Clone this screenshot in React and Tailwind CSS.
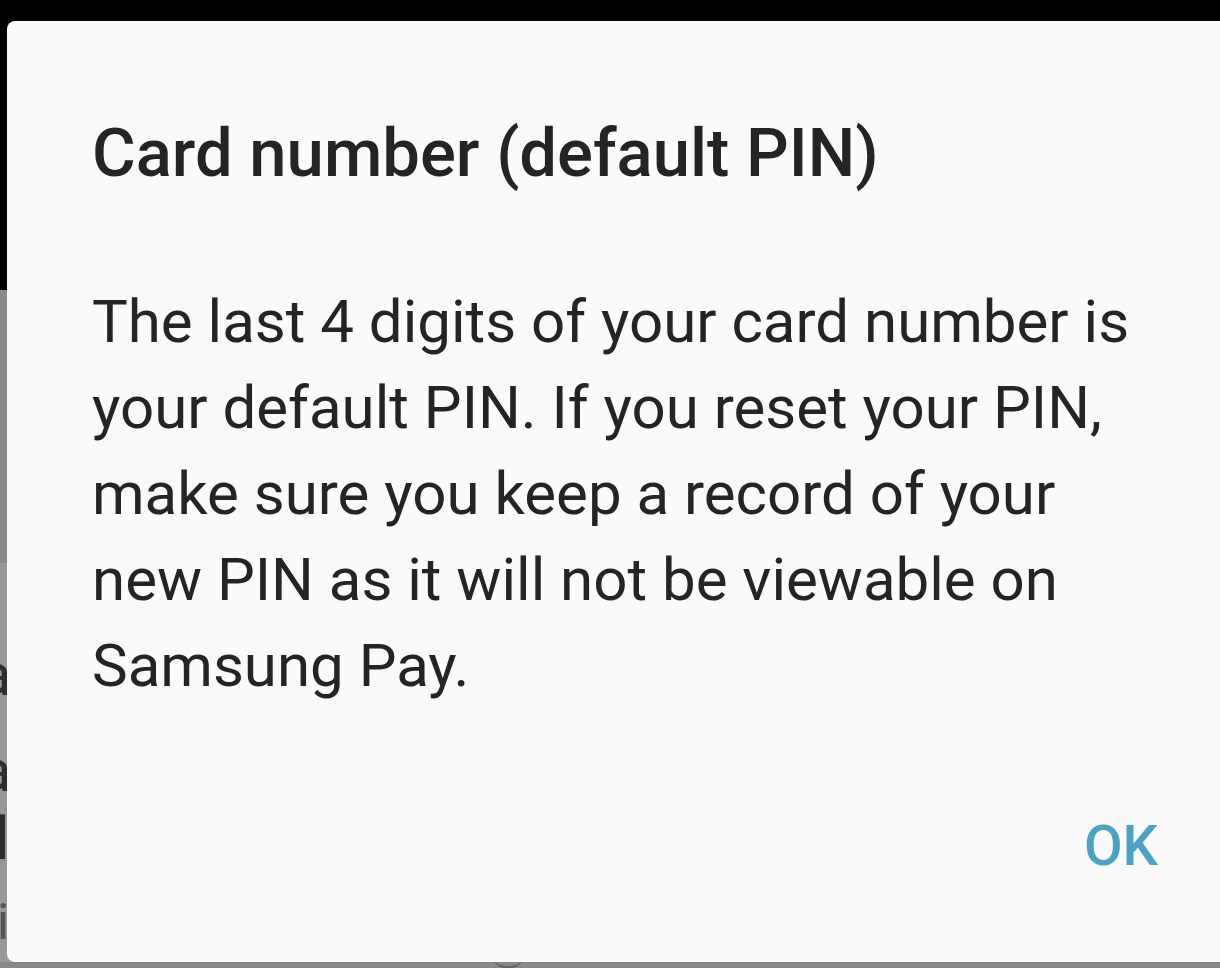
import React from 'react';

const body =
  'The last 4 digits of your card number is your default PIN. If you reset your PIN, make sure you keep a record of your new PIN as it will not be viewable on Samsung Pay.';

// dimmed screen behind the dialog, only the left edge shows
function Backdrop() {
  return (
    <div className="flex h-full w-full flex-col">
      <div className="h-[290px] bg-black" />
      <div className="h-[273px] bg-[#8b8b8b]" />
      <div className="relative flex-1 bg-[#979797] font-['Roboto',sans-serif] text-[#2e2e2e]">
        <span className="absolute left-[-21px] top-[82px] text-[60px] leading-none">a</span>
        <span className="absolute left-[-21px] top-[178px] text-[60px] leading-none">a</span>
        <span className="absolute left-[-5px] top-[246px] text-[60px] leading-none">l</span>
        <span className="absolute left-[-3px] top-[334px] text-[50px] leading-none text-[#555]">i</span>
      </div>
      <div className="relative h-[6px] bg-[#888]">
        <div className="absolute left-[493px] top-[-6px] h-[12px] w-[30px] rounded-b-full border-b-2 border-[#666]" />
      </div>
    </div>
  );
}

export default function App() {
  return (
    <div className="relative h-[968px] w-[1220px] overflow-hidden bg-[#888]">
      <Backdrop />
      <div className="absolute left-[7px] top-[21px] flex h-[941px] w-[1240px] flex-col rounded-[8px] bg-[#fafafa] pl-[85px] pr-[89px] pt-[92px] font-['Roboto',sans-serif]">
        <h1 className="text-[67px] font-medium leading-[80px] text-[#242424]">
          Card number (default PIN)
        </h1>
        <p className="mt-[86px] w-[1060px] text-[60px] leading-[86px] text-[#242424]">
          {body}
        </p>
        <div className="mt-[104px] flex justify-end">
          <button className="text-[56px] font-medium leading-[67px] text-[#4ba3c3]">OK</button>
        </div>
      </div>
    </div>
  );
}
